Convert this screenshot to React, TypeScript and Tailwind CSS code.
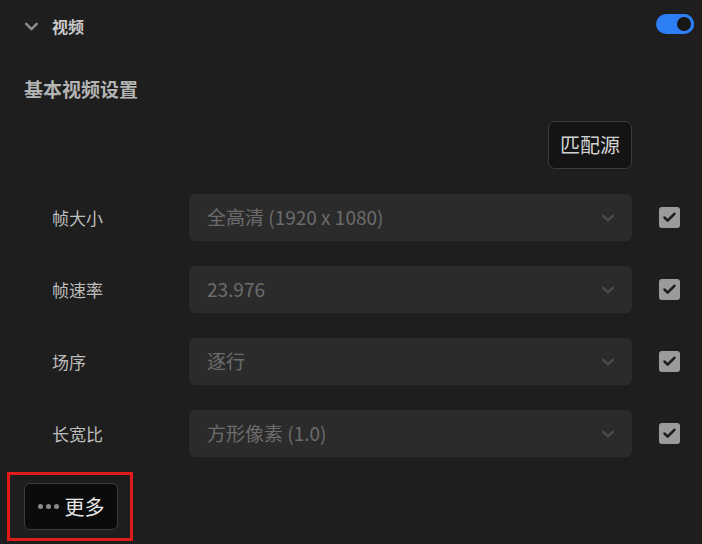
import { ChevronDown, Check } from "lucide-react";

const rows = [
  { label: "帧大小", value: "全高清 (1920 x 1080)" },
  { label: "帧速率", value: "23.976" },
  { label: "场序", value: "逐行" },
  { label: "长宽比", value: "方形像素 (1.0)" },
];

export default function App() {
  return (
    <div
      className="w-[702px] h-[544px] bg-[#1e1e1e] overflow-hidden"
      style={{ fontFamily: '"Noto Sans CJK SC", "Noto Sans", sans-serif' }}
    >
      {/* header */}
      <div className="flex items-center justify-between pl-[21px] pr-[8px] pt-[14px] h-[38px]">
        <div className="flex items-center gap-[10px]">
          <ChevronDown size={21} strokeWidth={3} className="text-[#8a8a8a]" />
          <span className="text-[16px] font-bold text-[#c8c8c8] leading-none">视频</span>
        </div>
        <div className="relative w-[38px] h-[20px] rounded-full bg-[#2e7ff5] mt-[-4px]">
          <div className="absolute right-0 top-0 w-[20px] h-[20px] rounded-full bg-[#2e7ff5] flex items-center justify-center">
            <div className="w-[14px] h-[14px] rounded-full bg-[#161616]" />
          </div>
        </div>
      </div>

      <div className="pl-[24px] pt-[39px] text-[19px] font-bold text-[#b4b4b4] leading-[24px]">
        基本视频设置
      </div>

      <div className="flex justify-end pr-[70px] pt-[20px]">
        <button className="w-[84px] h-[48px] rounded-[7px] border border-[#3c3c3c] bg-[#141414] text-[20px] text-[#d2d2d2]">
          匹配源
        </button>
      </div>

      <div className="flex flex-col gap-[25px] pt-[25px]">
        {rows.map((r) => (
          <div key={r.label} className="flex items-center h-[47px]">
            <div className="w-[189px] pl-[52px] text-[17px] text-[#bdbdbd]">{r.label}</div>
            <div className="w-[443px] h-[47px] rounded-[6px] bg-[#2b2b2b] flex items-center justify-between pl-[18px] pr-[14px]">
              <span className="text-[19px] text-[#6c6c6c]">{r.value}</span>
              <ChevronDown size={20} strokeWidth={2.5} className="text-[#4e4e4e]" />
            </div>
            <div className="ml-[27px] w-[21px] h-[21px] rounded-[3px] bg-[#9b9b9b] flex items-center justify-center">
              <Check size={15} strokeWidth={4} className="text-[#1e1e1e]" />
            </div>
          </div>
        ))}
      </div>

      <div className="mt-[15px] ml-[7px] w-[126px] h-[69px] border-[3px] border-[#e01b1b] flex items-center pl-[14px]">
        <button className="w-[94px] h-[47px] rounded-[6px] border border-[#3c3c3c] bg-[#0b0b0b] flex items-center justify-center gap-[6px]">
          <span className="flex gap-[3px]">
            <span className="w-[5px] h-[5px] rounded-full bg-[#8a8a8a]" />
            <span className="w-[5px] h-[5px] rounded-full bg-[#8a8a8a]" />
            <span className="w-[5px] h-[5px] rounded-full bg-[#8a8a8a]" />
          </span>
          <span className="text-[20px] text-[#e6e6e6]">更多</span>
        </button>
      </div>
    </div>
  );
}
